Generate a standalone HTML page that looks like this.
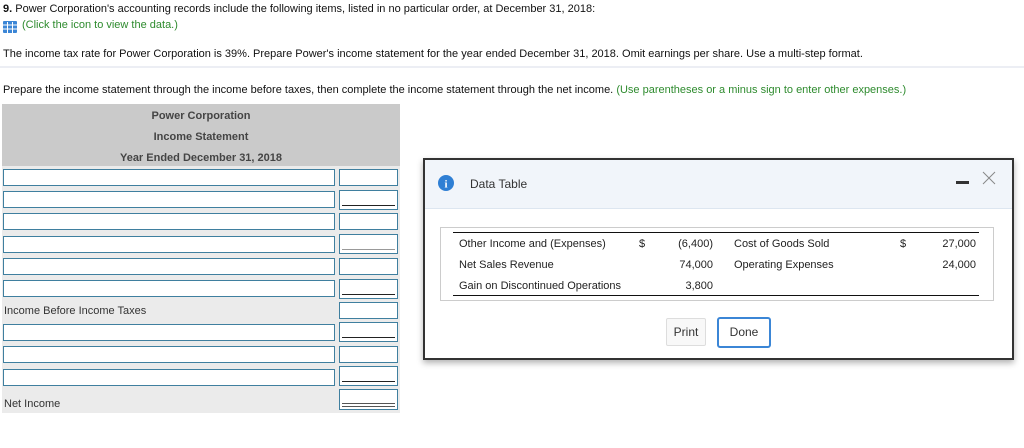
<html><head><style>
body{margin:0;width:1024px;height:448px;background:#fff;font-family:"Liberation Sans",Arial,sans-serif;position:relative;overflow:hidden;color:#111}
.a{position:absolute;white-space:nowrap}
.t{font-size:11px}
.in{position:absolute;height:15px;background:#fff;border:1px solid #3f7f9f;box-sizing:content-box}
.l{left:3px;width:330px}
.r{left:339px;width:57px}
.u1::after{content:"";position:absolute;left:2px;right:2px;bottom:3px;border-bottom:1px solid #222}
.u2::after{content:"";position:absolute;left:2px;right:2px;bottom:2px;height:2px;border-top:1px solid #555;border-bottom:1px solid #555}
.ug::after{content:"";position:absolute;left:2px;right:2px;bottom:3px;border-bottom:1px solid #999}
.m{font-size:11px;color:#222}
</style></head><body>
<div class="a t" style="left:3px;top:3px"><b>9.</b> Power Corporation's accounting records include the following items, listed in no particular order, at December 31, 2018:</div>
<svg class="a" style="left:3px;top:21px" width="14" height="12"><rect width="14" height="12" rx="1" fill="#3b86d6"/><g stroke="#fff" stroke-width="1"><line x1="0" y1="4" x2="14" y2="4"/><line x1="0" y1="8" x2="14" y2="8"/><line x1="4.5" y1="1" x2="4.5" y2="12"/><line x1="9.5" y1="1" x2="9.5" y2="12"/></g></svg>
<div class="a t" style="left:22px;top:19px;color:#2e8b2e">(Click the icon to view the data.)</div>
<div class="a t" style="left:3px;top:48px">The income tax rate for Power Corporation is 39%. Prepare Power's income statement for the year ended December 31, 2018. Omit earnings per share. Use a multi-step format.</div>
<div class="a" style="left:0;top:66px;width:1024px;height:2px;background:#eceef4"></div>
<div class="a t" style="left:3px;top:84px">Prepare the income statement through the income before taxes, then complete the income statement through the net income. <span style="color:#2e8b2e">(Use parentheses or a minus sign to enter other expenses.)</span></div>
<div class="a" style="left:2px;top:104px;width:398px;height:62px;background:#cacaca"></div>
<div class="a t" style="left:2px;width:398px;text-align:center;top:110px;font-weight:bold;color:#444">Power Corporation</div>
<div class="a t" style="left:2px;width:398px;text-align:center;top:131px;font-weight:bold;color:#444">Income Statement</div>
<div class="a t" style="left:2px;width:398px;text-align:center;top:152px;font-weight:bold;color:#444">Year Ended December 31, 2018</div>
<div class="a" style="left:2px;top:166px;width:398px;height:247px;background:#ebebeb"></div>
<div class="in l" style="top:169px"></div><div class="in r" style="top:169px"></div>
<div class="in l" style="top:191px"></div><div class="in r u1" style="top:190px;height:18px"></div>
<div class="in l" style="top:213px"></div><div class="in r" style="top:213px"></div>
<div class="in l" style="top:236px"></div><div class="in r ug" style="top:234px;height:18px"></div>
<div class="in l" style="top:258px"></div><div class="in r" style="top:258px"></div>
<div class="in l" style="top:280px"></div><div class="in r u1" style="top:279px;height:18px"></div>
<div class="a t" style="left:4px;top:305px;color:#333">Income Before Income Taxes</div>
<div class="in r" style="top:302px"></div>
<div class="in l" style="top:324px"></div><div class="in r u1" style="top:322px;height:18px"></div>
<div class="in l" style="top:346px"></div><div class="in r" style="top:346px"></div>
<div class="in l" style="top:369px"></div><div class="in r u1" style="top:366px;height:18px"></div>
<div class="a t" style="left:4px;top:398px;color:#333">Net Income</div>
<div class="in r u2" style="top:389px;height:19px"></div>

<div class="a" style="left:423px;top:158px;width:587px;height:198px;border:2px solid #333;background:#fff;box-shadow:0 3px 6px rgba(0,0,0,.3)"></div>
<div class="a" style="left:425px;top:160px;width:587px;height:48px;background:#f1f5fa;border-bottom:1px solid #dde6f0"></div>
<svg class="a" style="left:438px;top:175px" width="16" height="16"><circle cx="8" cy="8" r="8" fill="#2f7fd4"/><text x="8" y="12.5" text-anchor="middle" font-size="11" font-weight="bold" fill="#fff" font-family="Liberation Serif">i</text></svg>
<div class="a" style="left:470px;top:177px;font-size:12px;color:#333">Data Table</div>
<div class="a" style="left:956px;top:181px;width:13px;height:3px;background:#333"></div>
<svg class="a" style="left:982px;top:171px" width="14" height="14"><path d="M1 1L13 13M13 1L1 13" stroke="#888" stroke-width="1"/></svg>
<div class="a" style="left:440px;top:227px;width:552px;height:72px;border:1px solid #ccc"></div>
<div class="a" style="left:453px;top:232px;width:526px;border-top:1px solid #111"></div>
<div class="a" style="left:453px;top:295px;width:526px;border-top:1px solid #111"></div>
<div class="a m" style="left:459px;top:238px">Other Income and (Expenses)</div>
<div class="a m" style="left:639px;top:238px">$</div>
<div class="a m" style="left:600px;width:113px;text-align:right;top:238px">(6,400)</div>
<div class="a m" style="left:734px;top:238px">Cost of Goods Sold</div>
<div class="a m" style="left:900px;top:238px">$</div>
<div class="a m" style="left:880px;width:96px;text-align:right;top:238px">27,000</div>
<div class="a m" style="left:459px;top:259px">Net Sales Revenue</div>
<div class="a m" style="left:600px;width:113px;text-align:right;top:259px">74,000</div>
<div class="a m" style="left:734px;top:259px">Operating Expenses</div>
<div class="a m" style="left:880px;width:96px;text-align:right;top:259px">24,000</div>
<div class="a m" style="left:459px;top:280px">Gain on Discontinued Operations</div>
<div class="a m" style="left:600px;width:113px;text-align:right;top:280px">3,800</div>
<div class="a" style="left:666px;top:318px;width:38px;height:26px;border:1px solid #ddd;border-radius:2px;background:#f8f8f8;font-size:12px;line-height:26px;text-align:center;color:#333">Print</div>
<div class="a" style="left:717px;top:317px;width:50px;height:27px;border:2px solid #3b86d6;border-radius:3px;background:#fff;font-size:12px;line-height:27px;text-align:center;color:#333">Done</div>
</body></html>
